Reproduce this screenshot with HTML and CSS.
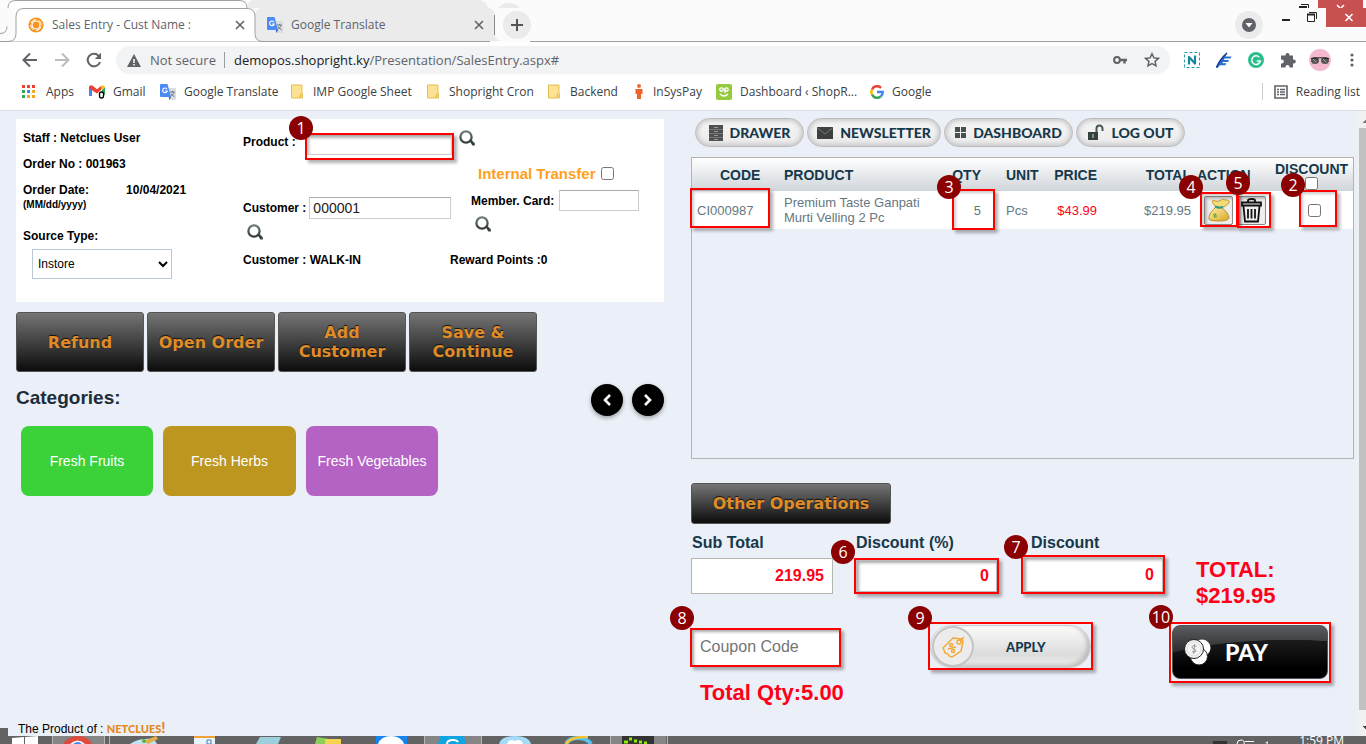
FILE: index.html
```html
<!DOCTYPE html>
<html lang="en">
<head>
<meta charset="utf-8">
<title>Sales Entry</title>
<link rel="stylesheet" href="styles.css">
</head>
<body>
<svg class="defs" aria-hidden="true">
  <defs>
    <linearGradient id="lens" x1="0" y1="0" x2="0" y2="1"><stop offset="0" stop-color="#6e7b76"/><stop offset="1" stop-color="#323d3a"/></linearGradient>
    <linearGradient id="sack" x1="0" y1="0" x2="1" y2="1"><stop offset="0" stop-color="#fff3b0"/><stop offset="1" stop-color="#d9a520"/></linearGradient>
    <symbol id="search" viewBox="0 0 16 16"><circle cx="7" cy="7" r="5.6" fill="none" stroke="url(#lens)" stroke-width="2.3"/><path d="M10.2 10.6l2-.9 3.6 3.5v2.3h-2.4z" fill="#35413e"/></symbol>
    <symbol id="translate" viewBox="0 0 16 16"><path d="M6 4h9a1 1 0 0 1 1 1v10a1 1 0 0 1-1 1H9z" fill="#dadce0"/><path d="M10 8h5M12.500 7v1M14 8c-.5 2-2 3.500-3.500 4.500M11 9.500c.8 1.400 2 2.500 3.500 3.200" stroke="#6b7b86" fill="none"/><path d="M1 0h6.500l3.500 13H1a1 1 0 0 1-1-1V1a1 1 0 0 1 1-1z" fill="#4c8bf5"/><path d="M9 13h2l-1.500 3z" fill="#2a56c6"/><path d="M7 5.200A2.300 2.300 0 1 0 7.200 7H5.200" fill="none" stroke="#fff" stroke-width="1.100"/></symbol>
    <symbol id="folder" viewBox="0 0 12 15"><path d="M.5 1h10.500v10h-2v3h-8.500z" fill="#fde293" stroke="#e3bf51"/><path d="M9.500 10h2v4h-2z" fill="#fde293" stroke="#e3bf51"/></symbol>
    <symbol id="cross" viewBox="0 0 10 10"><path d="M1 1l8 8M9 1l-8 8" stroke="#5f6368" stroke-width="1.600"/></symbol>
  </defs>
</svg>

<header class="tabs">
  <svg class="outline" width="600" height="42" aria-hidden="true">
    <path d="M248 8V6q0-6 6-6h226q6 1 8 8z" fill="#ebebeb"/>
    <path d="M8 8q0-7.500 8-7.500h223q8 0 8 7.500" fill="#fff" stroke="#a0a0a0"/>
    <circle cx="509" cy="17" r="14" fill="#ebebeb"/><path d="M490 8h40v34h-40z" fill="#fbfbfb"/>
    <path d="M0 33.500q7 0 7-7" fill="none" stroke="#a0a0a0"/>
    <path d="M255 41V16q0-8 8-8h224q8 0 8 8v18q0 7 7 7z" fill="#ebebeb"/>
    <path d="M8 41.500q8 0 8-8V16.500q0-8 8-8h223q8 0 8 8v17q0 8 8 8" fill="#fff" stroke="#a0a0a0"/>
    <path d="M494.500 15v20" stroke="#888"/>
  </svg>
  <div class="tab tab-active">
    <svg width="16" height="16" viewBox="0 0 16 16"><circle cx="8" cy="8" r="7.600" fill="#f7931e"/><circle cx="8" cy="8" r="4" fill="none" stroke="#fff" stroke-width="1.200"/><path d="M3 6Q4.500 2.500 8 2.500M8 13.500q4 0 5-4M2.600 8q.2 3 2.500 4.700M13.400 8q-.2-3-2.500-4.700" stroke="#fff" fill="none"/></svg>
    <span class="tab-title">Sales Entry - Cust Name :</span>
    <button class="plain" aria-label="Close tab"><svg width="10" height="10"><use href="#cross"/></svg></button>
  </div>
  <div class="tab">
    <svg width="16" height="16"><use href="#translate"/></svg>
    <span class="tab-title">Google Translate</span>
    <button class="plain" aria-label="Close tab"><svg width="10" height="10"><use href="#cross"/></svg></button>
  </div>
  <button class="round newtab" aria-label="New tab"><svg width="12" height="12"><path d="M6 0v12M0 6h12" stroke="#555" stroke-width="2"/></svg></button>
  <span class="grow"></span>
  <button class="round" aria-label="Search tabs"><svg width="16" height="16"><circle cx="8" cy="8" r="7" fill="#5f6368"/><path d="M4.500 6h7L8 10.500z" fill="#fff"/></svg></button>
  <svg class="winctl" width="110" height="42" aria-hidden="true">
    <path d="M62 0h45v8H62z" fill="#c75050"/><path d="M81 5l3 3M88 5l-3 3" stroke="#fff" stroke-width="1.500"/>
    <path d="M70 8h40v19H70z" fill="#c75050"/><path d="M89.500 14l7 7M96.500 14l-7 7" stroke="#fff" stroke-width="1.600"/>
    <path d="M26 20h8" stroke="#222" stroke-width="2"/><path d="M51.500 14.500h7v7h-7z" fill="none" stroke="#222"/><path d="M51 14.500h8" stroke="#222" stroke-width="2"/><path d="M53 12.500h7.500V19" fill="none" stroke="#222"/>
    <path d="M43 7h8" stroke="#222" stroke-width="2"/><path d="M45 4.500h7.500V8" fill="none" stroke="#222"/>
  </svg>
</header>

<nav class="toolbar">
  <button class="plain" aria-label="Back"><svg width="16" height="16"><path d="M15 8H2M8 1.500L1.500 8 8 14.500" fill="none" stroke="#5f6368" stroke-width="2"/></svg></button>
  <button class="plain" aria-label="Forward"><svg width="16" height="16"><path d="M1 8h13M8 1.500L14.500 8 8 14.500" fill="none" stroke="#bdbdbd" stroke-width="2"/></svg></button>
  <button class="plain" aria-label="Reload"><svg width="16" height="16"><path d="M14 10A6.300 6.300 0 1 1 12.700 3.800" fill="none" stroke="#5f6368" stroke-width="2"/><path d="M15 .8V7H8.800z" fill="#5f6368"/></svg></button>
  <div class="omnibox">
    <svg width="14" height="13"><path d="M7 0l7 13H0z" fill="#5f6368"/><path d="M7 5v4M7 10v1.500" stroke="#fff" stroke-width="1.500"/></svg>
    <span class="notsecure">Not secure</span>
    <span class="url"><b>demopos.shopright.ky</b>/Presentation/SalesEntry.aspx#</span>
    <svg width="14" height="8"><circle cx="4" cy="4" r="2.900" fill="none" stroke="#5f6368" stroke-width="2"/><path d="M7 4h7M11.500 4v3.500" stroke="#5f6368" stroke-width="2.400"/></svg>
    <svg width="16" height="16" viewBox="0 0 16 16"><path d="M8 1.800l1.900 4.100 4.500.5-3.300 3 .9 4.400L8 11.600l-4 2.200.9-4.400-3.300-3 4.500-.5z" fill="none" stroke="#5f6368" stroke-width="1.500"/></svg>
  </div>
  <svg width="16" height="16"><path d="M.5.500h15v15H.5z" fill="none" stroke="#2a9aa8" stroke-dasharray="3 2"/><path d="M5 12.500V5L11 11.500V3.500" fill="none" stroke="#17889a" stroke-width="2.200" stroke-linejoin="round"/></svg>
  <svg width="16" height="16"><path d="M0 15.500Q3 7 11.500.5L9.500 4.500H15.500l-1 2H8.500L8 8h5l-1 2H7l-.6 1.300h4l-1 2H4L1.500 16z" fill="#2d6fd0"/><path d="M.5 15.500Q4 7 11 1" stroke="#183d8f" stroke-width="1.500" fill="none"/></svg>
  <svg width="16" height="16"><circle cx="8" cy="8" r="8" fill="#2bbd8c"/><path d="M11.300 5.300A4.300 4.300 0 1 0 12.300 9H8.800" fill="none" stroke="#fff" stroke-width="1.500"/></svg>
  <svg width="16" height="16"><path d="M1 3.500h4.500V3a2 2 0 0 1 4 0v.5H13V7.500h.8a2 2 0 0 1 0 4H13v4H9.500V15a2 2 0 0 0-4 0v.5H1V11.500h.8a2 2 0 0 0 0-4H1z" fill="#5f6368"/></svg>
  <svg class="avatar" width="22" height="22"><circle cx="11" cy="11" r="11" fill="#f5b9cf"/><ellipse cx="6" cy="11.500" rx="4" ry="3.500" fill="#555"/><ellipse cx="16" cy="11.500" rx="4" ry="3.500" fill="#555"/><path d="M2 9.500Q11 8 20 9.500" stroke="#222" fill="none"/><path d="M4 10l3 3M14 10l3 3" stroke="#aaa"/></svg>
  <svg width="4" height="16"><circle cx="2" cy="3" r="1.600" fill="#5f6368"/><circle cx="2" cy="8" r="1.600" fill="#5f6368"/><circle cx="2" cy="13" r="1.600" fill="#5f6368"/></svg>
</nav>

<nav class="bookmarks">
  <a href="#"><svg width="14" height="14"><path d="M0 0h3v3H0zM5 0h3v3H5zM10 0h3v3h-3z" fill="#ea4335"/><path d="M0 5h3v3H0zM0 10h3v3H0z" fill="#34a853"/><path d="M5 5h3v3H5z" fill="#4285f4"/><path d="M10 5h3v3h-3zM5 10h3v3H5zM10 10h3v3h-3z" fill="#f4a820"/></svg><span>Apps</span></a>
  <a href="#"><svg width="16" height="14"><path d="M0 2v9h3V5z" fill="#4285f4"/><path d="M13 5v5h3V2z" fill="#34a853"/><path d="M0 1.500Q2-.5 4 1l4 3.300L12 1v4L8 8.500 0 3.500z" fill="#ea4335"/><path d="M12 1q3-1.500 4 1l-4 3z" fill="#fbbc04"/><rect x="10.500" y="7" width="4" height="6" rx="2" fill="#fff" stroke="#000" stroke-width="1.300"/></svg><span>Gmail</span></a>
  <a href="#"><svg width="16" height="16"><use href="#translate"/></svg><span>Google Translate</span></a>
  <a href="#" class="wide"><svg width="12" height="15"><use href="#folder"/></svg><span>IMP Google Sheet</span></a>
  <a href="#" class="wide"><svg width="12" height="15"><use href="#folder"/></svg><span>Shopright Cron</span></a>
  <a href="#" class="wide"><svg width="12" height="15"><use href="#folder"/></svg><span>Backend</span></a>
  <a href="#" class="wide"><svg width="8" height="15"><circle cx="4" cy="2" r="2" fill="#f26a36"/><path d="M.500 5h7v5H6v5H2v-5H.5z" fill="#f2622c"/></svg><span>InSysPay</span></a>
  <a href="#"><svg width="16" height="16"><rect width="16" height="16" rx="2" fill="#96c93d"/><circle cx="5.500" cy="5.500" r="1.700" fill="none" stroke="#fff" stroke-width="1.300"/><circle cx="10.500" cy="5.500" r="1.700" fill="none" stroke="#fff" stroke-width="1.300"/><path d="M9 5v4M4 10q4 4 8 0" stroke="#fff" stroke-width="1.300" fill="none"/></svg><span>Dashboard ‹ ShopR...</span></a>
  <a href="#"><svg width="14" height="14" viewBox="0 0 14 14" fill="none" stroke-width="2.500"><path d="M11 2.800A5.600 5.600 0 0 0 2 4.500" stroke="#ea4335"/><path d="M2 4.500a5.600 5.600 0 0 0 0 5" stroke="#fbbc04"/><path d="M2 9.500a5.600 5.600 0 0 0 8.700 2" stroke="#34a853"/><path d="M10.700 11.500Q12.700 10 12.700 7H7" stroke="#4285f4"/></svg><span>Google</span></a>
  <a href="#" class="reading"><svg width="14" height="14"><path d="M1 1h12v12H1z" fill="none" stroke="#5f6368" stroke-width="1.600"/><path d="M3 4.500h2M6 4.500h5M3 7h2M6 7h5M3 9.500h2M6 9.500h5" stroke="#5f6368" stroke-width="1.300"/></svg><span>Reading list</span></a>
</nav>

<main class="page">
  <section class="left">
    <form class="card">
      <div class="order">
        <p class="line">Staff : Netclues User</p>
        <p class="line">Order No : 001963</p>
        <p class="date"><span>Order Date:</span><span>10/04/2021</span></p>
        <p class="hint">(MM/dd/yyyy)</p>
        <label class="source" for="source">Source Type:</label>
        <select id="source"><option>Instore</option></select>
      </div>
      <div class="customer">
        <div class="product-row">
          <label for="product">Product :</label>
          <div class="mark mark-product"><input id="product" type="text"><span class="badge b1">1</span></div>
          <button class="plain" type="button" aria-label="Find product"><svg width="16" height="16"><use href="#search"/></svg></button>
        </div>
        <div class="pair">
          <div class="cust">
            <div class="field"><label for="cust">Customer :</label><input id="cust" type="text" value="000001"></div>
            <button class="plain" type="button" aria-label="Find customer"><svg width="16" height="16"><use href="#search"/></svg></button>
          </div>
          <div class="member">
            <div class="transfer"><label for="transfer">Internal Transfer</label><input id="transfer" type="checkbox"></div>
            <div class="field"><label for="card">Member. Card:</label><input id="card" type="text"></div>
            <button class="plain" type="button" aria-label="Find member"><svg width="16" height="16"><use href="#search"/></svg></button>
          </div>
        </div>
        <div class="info"><span>Customer : WALK-IN</span><span>Reward Points :0</span></div>
      </div>
    </form>
    <div class="actions">
      <button class="dark">Refund</button>
      <button class="dark">Open Order</button>
      <button class="dark">Add<br>Customer</button>
      <button class="dark">Save &amp;<br>Continue</button>
    </div>
    <div class="cat-head">
      <h2>Categories:</h2>
      <button class="arrow" aria-label="Previous"><svg width="12" height="14"><path d="M9 2L4 7l5 5" fill="none" stroke="#fff" stroke-width="2.600"/></svg></button>
      <button class="arrow" aria-label="Next"><svg width="12" height="14"><path d="M3 2l5 5-5 5" fill="none" stroke="#fff" stroke-width="2.600"/></svg></button>
    </div>
    <div class="cats">
      <button class="cat fruits">Fresh Fruits</button>
      <button class="cat herbs">Fresh Herbs</button>
      <button class="cat vegs">Fresh Vegetables</button>
    </div>
    <footer class="credit">The Product of : <a href="#">NETCLUES<b>!</b></a></footer>
  </section>

  <section class="right">
    <div class="pills">
      <button class="pill drawer"><svg width="14" height="18"><path d="M0 1h14v16H0z" fill="#4e5050"/><path d="M0 5.500h14M0 9.500h14M0 13.500h14" stroke="#777"/><path d="M5 3.500h4M5 7.500h4M5 11.500h4M5 15.500h4" stroke="#999"/></svg>DRAWER</button>
      <button class="pill news"><svg width="16" height="12"><path d="M0 0h16v12H0z" fill="#3d403f"/><path d="M0 .5l8 6.500 8-6.500" fill="none" stroke="#777"/></svg>NEWSLETTER</button>
      <button class="pill dash"><svg width="11" height="11"><path d="M0 0h5v5H0zM6 0h5v5H6zM0 6h5v5H0zM6 6h5v5H6z" fill="#47504e"/></svg>DASHBOARD</button>
      <button class="pill logout"><svg width="17" height="17"><path d="M1 8h10v8H1z" fill="#34413e"/><path d="M9.500 8V4.500a3 3 0 0 1 6 0V7" fill="none" stroke="#4a5653" stroke-width="2"/><path d="M6 10v4" stroke="#ddd"/></svg>LOG OUT</button>
    </div>
    <div class="grid">
      <table>
        <colgroup><col class="c-code"><col><col class="c-qty"><col class="c-unit"><col class="c-price"><col class="c-total"><col class="c-action"><col class="c-disc"></colgroup>
        <thead><tr><th class="code">CODE</th><th>PRODUCT</th><th class="num">QTY</th><th class="unit">UNIT</th><th class="num">PRICE</th><th class="num">TOTAL</th><th class="act">ACTION</th><th class="disc"><label for="all">DISCOUNT</label><input id="all" type="checkbox"></th></tr></thead>
        <tbody><tr>
          <td class="codeval">CI000987<span class="mark over m-code"></span></td>
          <td>Premium Taste Ganpati<br>Murti Velling 2 Pc</td>
          <td class="num">5<span class="mark over m-qty"><span class="badge b3">3</span></span></td>
          <td class="unit">Pcs</td>
          <td class="num red">$43.99</td>
          <td class="num">$219.95</td>
          <td class="tools"><div>
            <button class="tool" aria-label="Discount item"><svg width="24" height="26" viewBox="0 0 24 26"><path d="M9 10Q4 5 6 3q3 2 6 1 4-3 7-1 4 0 3 3-3 4-10 5z" fill="#f4dc74" stroke="#c39a35"/><path d="M9 10Q1 17 2 22q1 2 10 2t10-3q0-5-8-11z" fill="url(#sack)" stroke="#bd8f2d"/><path d="M8 9.500q4 2 8 .5" stroke="#2f9a86" stroke-width="2" fill="none"/><path d="M6 17l3-1 1 4-3 1z" fill="#7fb247"/></svg></button>
            <button class="tool trash" aria-label="Delete item"><svg width="24" height="26" viewBox="0 0 24 26" fill="none" stroke="#111" stroke-width="1.800"><path d="M2 5.500h19v3H2z"/><path d="M8 5V3.500Q8 2 11.500 2T15 3.500V5M3.500 9l1.500 15.500h13L19.500 9M8 12v9.500M11.500 12v9.500M15 12v9.500"/></svg></button>
            <span class="mark over m-sack"><span class="badge b4">4</span></span><span class="mark over m-trash"><span class="badge b5">5</span></span></div></td>
          <td class="disc"><input type="checkbox" aria-label="Discount this item"><span class="mark over m-disc"><span class="badge b2">2</span></span></td>
        </tr></tbody>
      </table>
    </div>
    <button class="dark other">Other Operations</button>
    <div class="sums">
      <div class="sum"><label for="sub">Sub Total</label><input class="amount" id="sub" type="text" value="219.95"></div>
      <div class="sum pct"><label for="pct">Discount (%)</label><div class="mark"><input class="amount" id="pct" type="text" value="0"><span class="badge b6">6</span></div></div>
      <div class="sum flat"><label for="flat">Discount</label><div class="mark"><input class="amount" id="flat" type="text" value="0"><span class="badge b7">7</span></div></div>
      <p class="total">TOTAL:<br>$219.95</p>
    </div>
    <div class="checkout">
      <div class="mark coupon"><input type="text" placeholder="Coupon Code" aria-label="Coupon Code"><span class="badge b8">8</span></div>
      <div class="mark apply"><button><span class="disc-icon"><svg width="28" height="28" viewBox="0 0 28 28" fill="none" stroke="#f3a734" stroke-width="1.400"><path d="M4 15L14 5l9 1 1 3-2 9-9 6-3-1-1-2-3-1-1-3z"/><circle cx="20" cy="9" r="2"/><circle cx="12" cy="12" r="1.500"/><circle cx="14" cy="18" r="1.500"/><path d="M9 16l8-2M21 8l4-4"/></svg></span><span>APPLY</span></button><span class="badge b9">9</span></div>
      <div class="mark pay"><button><svg width="28" height="28" viewBox="0 0 28 28"><circle cx="18" cy="10" r="8.500" fill="#fff"/><circle cx="15" cy="18.500" r="8.500" fill="#fff" stroke="#222"/><circle cx="10" cy="11" r="9.500" fill="#f4f4f4" stroke="#222"/><circle cx="10" cy="11" r="7" fill="none" stroke="#ddd"/><path d="M12.500 8.500q-4-2-4.500.5 0 1.500 2 2t2 2.300q-1.500 1.500-4 .2M10.700 6l-1 10" fill="none" stroke="#999"/></svg>PAY</button><span class="badge b10">10</span></div>
    </div>
    <p class="qty-total">Total Qty:5.00</p>
  </section>

  <div class="scroll" aria-hidden="true"><span class="up"></span><span class="thumb"></span><span class="down"></span></div>
</main>

<div class="taskbar" aria-hidden="true">
  <svg width="700" height="8" viewBox="0 0 700 8">
    <path d="M12 2l12-1v7H12zM25 1l13-1v8H25z" fill="#fff"/>
    <path d="M53 0h51v8H53zM424 0h57v8h-57zM611 0h55v8h-55z" fill="#858585"/><path d="M52.500 0v8M104.500 0v8M109.500 0v8M424.500 0v8M481.500 0v8M610.500 0v8M667.500 0v8" stroke="#b5b5b5"/>
    <path d="M63 8q5-8 15-8 10 0 14 8z" fill="#dd4b3e"/><path d="M70 8q8-7 15 0z" fill="#fff"/><path d="M73 8q5-4 9 0z" fill="#4285f4"/>
    <path d="M130 8q8-6 24-5l3 5z" fill="#bfe3f2"/><path d="M144 5l12-5 2 3-10 5z" fill="#e2b04b"/><circle cx="144" cy="5" r="2" fill="#5fae42"/>
    <path d="M194 0h21v8h-21z" fill="#e8f4fc"/><path d="M194 0h21v2h-21z" fill="#f1a33a"/><path d="M207 4h4v4h-4z" fill="none" stroke="#4a7ab0"/>
    <path d="M260 1h21l-3 7h-22z" fill="#9ccfdc"/><path d="M317 1l24 4v3h-26z" fill="#8bd05a"/><path d="M325 3h16v5h-16z" fill="#f4d34e"/>
    <path d="M376 0h31v8h-31z" fill="#1684ee"/><path d="M378 8q3-8 13-8t13 8z" fill="#fff"/>
    <path d="M438 8l2-8h24l2 8z" fill="#0ea5e0"/><path d="M447 8q0-4 6-4 4 0 5 2" fill="none" stroke="#fff" stroke-width="2"/>
    <path d="M499 8q2-8 16-8t16 8z" fill="#a4dcf8"/><path d="M507 8q2-6 8-3 6-3 8 3z" fill="#fff"/>
    <path d="M566 8q3-6 12-6 9 0 13 6" fill="none" stroke="#57c3ee" stroke-width="4"/><path d="M566 8q5-8 22-7" fill="none" stroke="#f5c431" stroke-width="2.500"/>
    <path d="M622 0h32v8h-32z" fill="#333"/><path d="M624 6h4M629 3h3M634 5h3M639 6h3M644 7h3" stroke="#8cf000" stroke-width="3"/>
  </svg>
  <span class="grow"></span>
  <svg width="70" height="8"><path d="M0 5h14v3H0z" fill="#333"/><path d="M24 8q0-4 4-4t3 4M32 5.500h9" fill="none" stroke="#fff"/><path d="M52 7l3-2v3z" fill="#ddd"/></svg>
  <span class="clock">1:59 PM</span>
</div>
</body>
</html>
```

FILE: styles.css
```css
* { box-sizing: border-box; }
body { margin: 0; height: 100vh; display: flex; flex-direction: column; overflow: hidden; background: #fff; font-family: "Liberation Sans", Arial, sans-serif; font-size: 12px; color: #000; }
p, h2 { margin: 0; }
button, input, select { font-family: inherit; }
input[type="checkbox"] { width: 13px; height: 13px; margin: 0; }
svg { flex: none; }
.defs { position: absolute; width: 0; height: 0; }
.grow { flex: 1; }
.plain { display: flex; padding: 0; border: 0; background: none; }

/* browser chrome */
.tabs, .toolbar, .bookmarks { flex: none; font-family: "Open Sans", "Noto Sans", sans-serif; color: #5f6368; }
.tabs { position: relative; display: flex; height: 42px; padding: 8px 0 0 16px; background: #fbfbfb; border-bottom: 1px solid #a0a0a0; }
.outline { position: absolute; left: 0; top: 0; }
.tab { position: relative; display: flex; align-items: center; width: 239px; padding: 0 10px 0 12px; gap: 8px; font-size: 12px; }
.tab-title { flex: 1; white-space: nowrap; }
.round { position: relative; display: flex; align-items: center; justify-content: center; width: 28px; height: 28px; margin-top: 3px; padding: 0; border: 0; border-radius: 50%; background: #ebebeb; }
.newtab { margin-left: 9px; }
.winctl { margin: -8px 0 0 -7px; }
.toolbar { display: flex; align-items: center; height: 36px; padding: 0 12px 0 22px; gap: 16px; background: #fff; }
.omnibox { flex: 1; display: flex; align-items: center; gap: 9px; height: 28px; margin: 0 -2px; padding: 0 10px 0 11px; border-radius: 14px; background: #f1f3f4; font-size: 14px; }
.omnibox svg + svg { margin-left: 8px; }
.notsecure { padding-right: 8px; border-right: 1px solid #9a9da1; line-height: 16px; font-size: 13px; }
.url { flex: 1; font-size: 13px; }
.url b { font-weight: 400; color: #202124; }
.avatar { margin: 0 3px 0 -3px; }
.bookmarks { display: grid; grid-template-columns: 67px 71px 131px 136px 121px 87px 81px 154px 1fr auto; align-items: center; height: 33px; padding: 0 6px 5px 22px; border-bottom: 1px solid #d8dbe0; }
.bookmarks a { display: flex; align-items: center; gap: 8px; color: #3c4043; text-decoration: none; font-size: 12px; white-space: nowrap; }
.bookmarks a:first-child { gap: 10px; }
.bookmarks .wide { gap: 10px; }
.bookmarks .reading { padding-left: 11px; border-left: 1px solid #ccc; }

/* page */
.page { flex: 1; min-height: 0; display: grid; grid-template-columns: minmax(0, 648fr) minmax(0, 693fr) 9px; padding-left: 16px; background: linear-gradient(#636363, #636363) 0 100% / 8px 8px no-repeat #ebeff7; }
.left { display: flex; flex-direction: column; padding-top: 8px; }
.right { padding: 7px 3px 0 27px; }
.card { display: grid; grid-template-columns: 220px 1fr; height: 183px; padding: 0 7px; background: #fff; font-weight: 700; font-size: 12px; }
.order { padding-top: 6px; }
.line { line-height: 26px; }
.date { display: flex; gap: 37px; margin-top: 4px; line-height: 18px; }
.hint { line-height: 12px; font-size: 10px; }
.source { display: block; margin-top: 18px; line-height: 14px; }
.order select { display: block; width: 140px; height: 30px; margin: 6px 0 0 9px; padding: 0 1px; border: 1px solid #bcc7d8; background: #fff; color: #000; font-size: 12px; }
.customer { padding-top: 11px; }
.product-row { display: flex; align-items: flex-start; height: 30px; gap: 5px; }
.product-row label { width: 57px; line-height: 24px; }
.card input[type="text"] { height: 22px; padding: 0 3px; border: 1px solid #ccc; border-top-color: #aaa; background: #fff; font-size: 14px; color: #222; }
.mark { position: relative; border: 2px solid #f00; box-shadow: 3px 3px 3px rgba(0, 0, 0, .3); }
.mark-product { width: 149px; height: 27px; margin-top: 3px; }
.card .mark-product input { display: block; width: 100%; height: 20px; box-shadow: inset 1px 2px 3px rgba(0, 0, 0, .3); }
.pair { display: grid; grid-template-columns: 228px 1fr; height: 92px; }
.field { display: flex; align-items: center; gap: 3px; }
.cust { padding-top: 37px; }
.cust .field input { width: 142px; }
.cust .plain { margin: 5px 0 0 4px; }
.member { padding-top: 4px; }
.transfer { display: flex; align-items: center; height: 20px; padding: 0 0 1px 7px; gap: 5px; margin-bottom: 6px; color: #ffa01e; font-size: 15px; }
.member .field { gap: 5px; }
.member .field input { width: 80px; height: 21px; }
.member .plain { margin: 5px 0 0 4px; }
.info { display: grid; grid-template-columns: 207px 1fr; line-height: 16px; }

.dark { padding: 0; border: 1px solid #555; border-radius: 3px; background: linear-gradient(#757575, #0c0c0c); color: #df8b27; font: 700 16px/19px "DejaVu Sans", Verdana, sans-serif; text-shadow: 0 -1px 1px #111; }
.actions { display: flex; gap: 3px; margin-top: 10px; }
.actions .dark { width: 128px; height: 60px; }
.cat-head { display: flex; align-items: center; gap: 9px; margin-top: 12px; }
.cat-head h2 { flex: 1; padding-bottom: 4px; font-size: 19px; color: #1b2d3b; }
.arrow { display: flex; align-items: center; justify-content: center; width: 32px; height: 32px; padding: 0; border: 0; border-radius: 50%; background: #000; box-shadow: 0 2px 4px rgba(0, 0, 0, .35); }
.cats { display: flex; gap: 10px; margin: 10px 5px; }
.cat { width: 132px; height: 70px; padding: 0; border: 0; border-radius: 8px; color: #fff; font-size: 14px; }
.fruits { background: #3bd139; }
.herbs { width: 133px; background: #bd961f; }
.vegs { background: #b562c5; }
.credit { margin-top: auto; padding-left: 2px; line-height: 13px; }
.credit a { color: #e28a1e; text-decoration: none; font: 900 11px/12px Lato, sans-serif; }
.credit b { font-size: 15px; line-height: 12px; }

.pills { display: flex; gap: 3px; padding-left: 4px; margin-bottom: 10px; }
.pill { display: flex; align-items: center; justify-content: center; gap: 7px; height: 29px; padding: 0; border: 1px solid #bbb; border-radius: 15px; background: linear-gradient(#f6f6f6, #eaeaea); box-shadow: inset 0 0 4px 2px #c8c8c8; color: #16384b; font: 900 14px/16px Lato, sans-serif; }
.drawer { width: 109px; }
.news { width: 134px; }
.dash { width: 129px; }
.logout { width: 109px; }

.grid { height: 302px; border: 1px solid #b4b4b0; }
table { width: 100%; border-collapse: collapse; table-layout: fixed; color: #667780; font-size: 13px; line-height: 15px; }
th, td { position: relative; padding: 0; text-align: left; }
th { padding-top: 2px; }
.c-code { width: 92px; }
.c-qty { width: 60px; }
.c-unit { width: 73px; }
.c-price { width: 43px; }
.c-total { width: 94px; }
.c-action { width: 77px; }
.c-disc { width: 85px; }
thead tr { height: 33px; background: linear-gradient(#fff, #d0d5da); }
th { color: #16384b; font-size: 14px; white-space: nowrap; }
.code { padding-left: 28px; }
.codeval { padding-left: 5px; }
.num { text-align: right; }
.unit { padding-left: 25px; }
.act { padding-left: 6px; }
.disc { text-align: center; }
th.disc { padding: 2px 0 0 2px; }
th.disc label { display: block; }
td.disc { padding-left: 7px; }
.disc input { display: block; margin: 0 auto; }
tbody tr { height: 38px; background: #fff; }
.red { color: #ff0018; }
.tools div { display: flex; gap: 4px; padding: 0 0 0 13px; }
.tool { display: flex; align-items: center; justify-content: center; width: 29px; height: 29px; padding: 0; border: 1px solid #888; border-radius: 2px; background: #eee; box-shadow: inset 2px 2px 3px #bbb; }
.over { position: absolute; pointer-events: none; box-shadow: 3px 3px 3px rgba(0, 0, 0, .3), inset 2px 2px 3px rgba(0, 0, 0, .2); }
.m-code { left: -2px; top: -3px; width: 80px; height: 40px; }
.m-qty { left: 31px; top: -2px; width: 43px; height: 41px; }
.m-sack { left: 9px; top: 1px; width: 38px; height: 35px; }
.m-trash { left: 46px; top: 1px; width: 34px; height: 36px; }
.m-disc { left: 31px; top: -1px; width: 38px; height: 37px; }
.badge { position: absolute; display: block; width: 24px; height: 24px; border-radius: 50%; background: #8b0000; color: #fff; font: 400 16px/24px "Open Sans", sans-serif; text-align: center; z-index: 2; }
.b1 { left: -18px; top: -19px; }
.b2 { left: -20px; top: -19px; }
.b3 { left: -17px; top: -16px; }
.b4 { left: -23px; top: -19px; }
.b5 { left: -13px; top: -23px; }
.b6 { left: -25px; top: -20px; }
.b7 { left: -19px; top: -22px; }
.b8 { left: -22px; top: -24px; }
.b9 { left: -22px; top: -18px; }
.b10 { left: -22px; top: -19px; }

.other { display: block; width: 200px; height: 41px; margin-top: 24px; }
.sums { display: flex; align-items: flex-start; margin-top: 9px; }
.sum { width: 142px; color: #16384b; font-size: 16px; font-weight: 700; }
.sum label { display: block; height: 25px; padding-left: 1px; line-height: 19px; }
.pct { width: 145px; margin-left: 21px; }
.flat { width: 144px; margin-left: 22px; }
.pct label { padding-left: 2px; }
.flat label { height: 22px; padding-left: 10px; }
.amount { display: block; width: 100%; height: 36px; padding: 0 8px; border: 1px solid #b8b6b0; background: #fff; color: #ff0018; text-align: right; font-size: 16px; font-weight: 700; }
.mark .amount { height: 32px; padding: 0 7px; border-color: #bbb; box-shadow: inset 2px 2px 3px #aaa; }
.flat .amount { height: 35px; padding-right: 8px; }
.total { margin: 24px 0 0 31px; color: #ff0018; font-size: 22px; font-weight: 700; line-height: 26px; }
.checkout { display: flex; align-items: flex-start; margin-top: 13px; }
.coupon { width: 151px; height: 39px; margin: 6px 0 0 -1px; }
.coupon input { display: block; width: 100%; height: 35px; padding: 0 8px 2px; border: 0; box-shadow: inset 2px 2px 3px #aaa; font-size: 16px; }
.coupon input::placeholder { color: #757575; }
.apply { width: 165px; height: 48px; margin-left: 87px; }
.apply button { display: flex; align-items: center; gap: 32px; width: 100%; height: 43px; margin-top: 1px; padding: 0 0 0 1px; border: 1px solid #ccc; border-radius: 22px; background: linear-gradient(#fafafa, #dcdcdc 70%, #eee); box-shadow: inset -3px -2px 4px #bbb; color: #16384b; font: 900 13px/16px Lato, sans-serif; }
.disc-icon { display: flex; align-items: center; justify-content: center; width: 42px; height: 41px; border: 2px solid #c4c4c4; border-radius: 50%; background: #ececec; }
.pay { width: 162px; height: 61px; margin-left: 76px; }
.pay button { display: flex; align-items: center; gap: 13px; width: 156px; height: 54px; margin: 1px; padding: 0 0 0 11px; border: 1px solid #555; border-radius: 8px; background: radial-gradient(ellipse 220px 54px at 75% 100%, rgba(0, 0, 0, .6) 0 70%, transparent 71%), linear-gradient(#5c5d61, #2a2b2d 50%, #000 80%); color: #fff; font: 900 23px/28px Lato, sans-serif; }
.qty-total { padding-left: 9px; color: #ff0018; font-size: 22px; font-weight: 700; line-height: 20px; }

.scroll { display: flex; flex-direction: column; align-items: flex-end; background: #f1f1f1; overflow: hidden; }
.thumb { flex: 1; width: 7px; background: #c1c1c1; }
.up, .down { flex: none; width: 4px; height: 17px; }
.up { background: linear-gradient(to bottom right, transparent 50%, #777 51%) 0 8px / 4px 4px no-repeat; }
.down { height: 26px; background: linear-gradient(to top right, transparent 50%, #444 51%) 0 16px / 4px 4px no-repeat; }
.taskbar { flex: none; display: flex; height: 8px; padding-right: 22px; background: #636363; overflow: hidden; }
.clock { margin-left: 16px; color: #fff; font: 400 12px/10px "Open Sans", sans-serif; }
```
